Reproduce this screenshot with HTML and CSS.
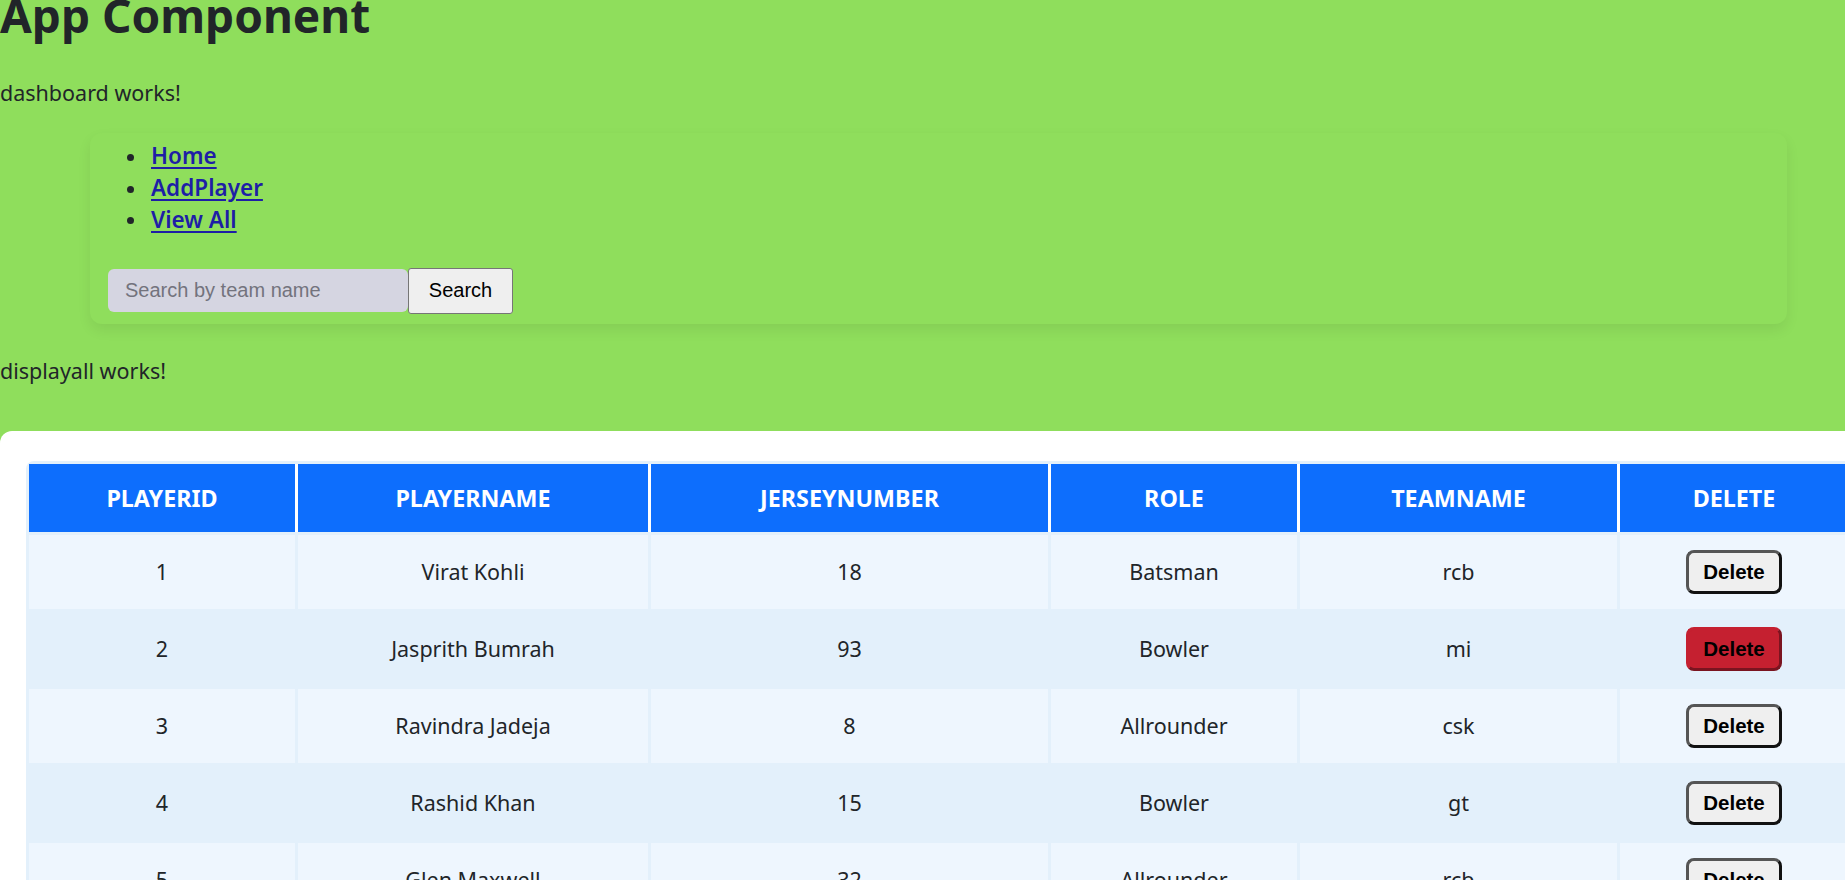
FILE: index.html
```html
<!DOCTYPE html>
<html lang="en">
<head>
<meta charset="utf-8">
<title>App Component</title>
<link rel="stylesheet" href="styles.css">
</head>
<body>
<div class="app">
  <h1 class="title">App Component</h1>
  <p class="works">dashboard works!</p>
  <nav class="card">
    <ul class="nav-list">
      <li><a href="#">Home</a></li>
      <li><a href="#">AddPlayer</a></li>
      <li><a href="#">View All</a></li>
    </ul>
    <form class="search">
      <input class="search-input" type="text" placeholder="Search by team name">
      <button class="search-btn" type="button">Search</button>
    </form>
  </nav>
  <p class="works works-second">displayall works!</p>
  <section class="panel">
    <table class="players">
      <colgroup>
        <col class="c1"><col class="c2"><col class="c3"><col class="c4"><col class="c5"><col class="c6">
      </colgroup>
      <thead>
        <tr><th>PLAYERID</th><th>PLAYERNAME</th><th>JERSEYNUMBER</th><th>ROLE</th><th>TEAMNAME</th><th>DELETE</th></tr>
      </thead>
      <tbody>
        <tr><td>1</td><td>Virat Kohli</td><td>18</td><td>Batsman</td><td>rcb</td><td><button class="del" type="button">Delete</button></td></tr>
        <tr><td>2</td><td>Jasprith Bumrah</td><td>93</td><td>Bowler</td><td>mi</td><td><button class="del del-hover" type="button">Delete</button></td></tr>
        <tr><td>3</td><td>Ravindra Jadeja</td><td>8</td><td>Allrounder</td><td>csk</td><td><button class="del" type="button">Delete</button></td></tr>
        <tr><td>4</td><td>Rashid Khan</td><td>15</td><td>Bowler</td><td>gt</td><td><button class="del" type="button">Delete</button></td></tr>
        <tr><td>5</td><td>Glen Maxwell</td><td>32</td><td>Allrounder</td><td>rcb</td><td><button class="del" type="button">Delete</button></td></tr>
      </tbody>
    </table>
  </section>
</div>
</body>
</html>
```
FILE: styles.css
```css
html, body {
  margin: 0;
  padding: 0;
  overflow: hidden;
  height: 100%;
}
body {
  background: #8fde5c;
  color: #212529;
  font-family: "Noto Sans", "Open Sans", sans-serif;
  font-size: 21.5px;
}
.app {
  display: flex;
  flex-direction: column;
  align-items: flex-start;
}
.title {
  margin: -10px 0 0;
  font-size: 46px;
  line-height: 50px;
  font-weight: 700;
}
.works {
  margin: 38px 0 0;
  line-height: 30px;
}
.works-second {
  margin-top: 32px;
}
.card {
  margin: 25px 0 0 90px;
  width: 1697px;
  box-sizing: border-box;
  padding: 7px 18px 10px;
  border-radius: 12px;
  background: #8fde5c;
  box-shadow: 0 6px 14px rgba(0, 0, 0, 0.07);
}
.nav-list {
  margin: 0;
  padding: 0 0 0 19px;
  list-style: none;
}
.nav-list li {
  display: flex;
  align-items: center;
  gap: 17px;
  line-height: 31.8px;
}
.nav-list li::before {
  content: "";
  width: 7px;
  height: 7px;
  margin-top: 3px;
  border-radius: 50%;
  background: #212529;
}
.nav-list a {
  color: #1e1ea6;
  font-size: 22.5px;
  font-weight: 600;
  text-decoration: underline;
  text-underline-offset: 3px;
}
.search {
  display: flex;
  align-items: center;
  margin-top: 32.5px;
}
.search-input {
  width: 300px;
  height: 43px;
  box-sizing: border-box;
  border: none;
  border-radius: 6px;
  background: #d5d5e1;
  padding: 0 17px;
  font-family: "Liberation Sans", Arial, sans-serif;
  font-size: 20px;
  color: #212529;
  outline: none;
}
.search-input::placeholder {
  color: #73737d;
}
.search-btn {
  width: 105px;
  height: 46px;
  box-sizing: border-box;
  border: 1px solid #767676;
  border-radius: 3px;
  background: #efefef;
  font-family: "Liberation Sans", Arial, sans-serif;
  font-size: 20px;
  color: #000;
  padding: 0;
}
.panel {
  margin-top: 45px;
  align-self: stretch;
  background: #fff;
  border-top-left-radius: 12px;
  padding: 30px 0 0 26px;
  min-height: 500px;
}
.players {
  table-layout: fixed;
  width: 1825px;
  border-collapse: separate;
  border-spacing: 3px;
  background: #e3f0fb;
  border-top-left-radius: 8px;
  text-align: center;
}
.c1 { width: 266px; }
.c2 { width: 350px; }
.c3 { width: 397px; }
.c4 { width: 246px; }
.c5 { width: 317px; }
.c6 { width: 228px; }
.players th {
  height: 68px;
  padding: 0;
  background: #0d6efd;
  color: #fff;
  font-weight: 700;
  font-size: 23.3px;
  vertical-align: middle;
}
.players th:not(:last-child) {
  box-shadow: 3px 0 0 #fff;
}
.players td {
  height: 74px;
  padding: 0;
  vertical-align: middle;
  background: #eef6fe;
}
.players tbody tr:nth-child(even) td {
  background: #e3f0fb;
}
.del {
  width: 96px;
  height: 44px;
  box-sizing: border-box;
  border: 3px solid;
  border-color: #555 #111 #111 #555;
  border-radius: 8px;
  background: #efefef;
  font-family: "Liberation Sans", Arial, sans-serif;
  font-size: 20.5px;
  font-weight: 700;
  color: #000;
  padding: 0;
}
.del-hover {
  background: #c52030;
  border-color: #c52030 #7a1420 #7a1420 #c52030;
}
```
